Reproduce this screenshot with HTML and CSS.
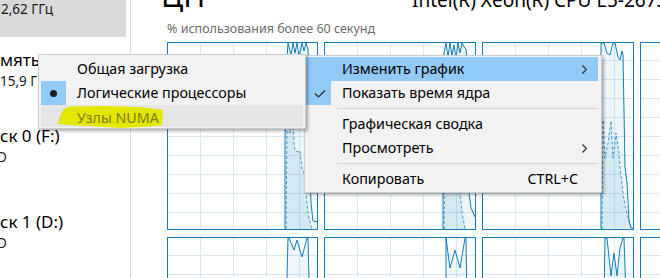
FILE: index.html
```html
<!DOCTYPE html>
<html lang="ru">
<head>
<meta charset="utf-8">
<title>Диспетчер задач — ЦП</title>
<link rel="stylesheet" href="styles.css">
</head>
<body>
<div class="app">
  <aside class="side">
    <div class="side-sel"><div class="side-sub">2,62 ГГц</div></div>
    <div class="side-item mem"><div class="side-title">мять</div><div class="side-sub">15,9 ГБ (16%)</div></div>
    <div class="side-item disk0"><div class="side-title">ск 0 (F:)</div><div class="side-sub cut">D</div></div>
    <div class="side-item disk1"><div class="side-title">ск 1 (D:)</div><div class="side-sub cut">D</div></div>
  </aside>

  <main class="main">
    <div class="header"><span class="title">ЦП</span><span class="cpu-name">Intel(R) Xeon(R) CPU E5-2673 v4 @ 2.30GHz</span></div>
    <div class="subtitle">% использования более 60 секунд</div>
    <div class="graphs">
      <div class="graph"><svg>
        <path class="grid" d="M32.5 0V186M65.5 0V186M98.5 0V186M131.5 0V186M0 17.5H152M0 36.5H152M0 55.5H152M0 74.5H152M0 93.5H152M0 112.5H152M0 131.5H152M0 150.5H152M0 169.5H152"/>
        <path class="area" d="M117,186 L117,100 L118,30 L120,0 L123,12 L125,0 L127,10 L129,0 L131,14 L134,0 L136,8 L138,0 L140,6 L141,40 L142,120 L143,160 L145,178 L150,179 L150,186 Z"/>
        <path class="karea" d="M118,186 L119,80 L120,40 L122,90 L124,50 L126,100 L127,108 L130,109 L132,108 L134,125 L136,130 L138,150 L140,170 L142,180 L144,186 Z"/>
        <path class="kline" d="M118,186 L119,80 L120,40 L122,90 L124,50 L126,100 L127,108 L130,109 L132,108 L134,125 L136,130 L138,150 L140,170 L142,180 L144,186"/>
        <path class="line" d="M117,186 L117,100 L118,30 L120,0 L123,12 L125,0 L127,10 L129,0 L131,14 L134,0 L136,8 L138,0 L140,6 L141,40 L142,120 L143,160 L145,178 L150,179"/>
      </svg></div>
      <div class="graph"><svg>
        <path class="grid" d="M32.5 0V186M65.5 0V186M98.5 0V186M131.5 0V186M0 17.5H152M0 36.5H152M0 55.5H152M0 74.5H152M0 93.5H152M0 112.5H152M0 131.5H152M0 150.5H152M0 169.5H152"/>
        <path class="area" d="M118,186 L118,80 L119,10 L121,0 L123,14 L125,0 L127,12 L129,2 L131,16 L133,0 L135,10 L137,0 L139,4 L141,6 L143,30 L144,150 L146,165 L152,178 L152,186 Z"/>
        <path class="karea" d="M119,186 L120,100 L122,60 L124,110 L126,80 L128,120 L132,130 L135,150 L137,170 L139,180 L140,186 Z"/>
        <path class="kline" d="M119,186 L120,100 L122,60 L124,110 L126,80 L128,120 L132,130 L135,150 L137,170 L139,180 L140,186"/>
        <path class="line" d="M118,186 L118,80 L119,10 L121,0 L123,14 L125,0 L127,12 L129,2 L131,16 L133,0 L135,10 L137,0 L139,4 L141,6 L143,30 L144,150 L146,165 L152,178"/>
      </svg></div>
      <div class="graph"><svg>
        <path class="grid" d="M32.5 0V186M65.5 0V186M98.5 0V186M131.5 0V186M0 17.5H152M0 36.5H152M0 55.5H152M0 74.5H152M0 93.5H152M0 112.5H152M0 131.5H152M0 150.5H152M0 169.5H152"/>
        <path class="area" d="M118,186 L118,0 L121,0 L124,10 L127,12 L130,0 L132,0 L135,14 L137,17 L139,8 L140,12 L142,124 L144,140 L146,177 L148,185 L148,186 Z"/>
        <path class="karea" d="M119,186 L120,77 L122,115 L125,100 L128,78 L130,115 L133,90 L136,110 L137,124 L140,150 L142,163 L148,185 Z"/>
        <path class="kline" d="M119,186 L120,77 L122,115 L125,100 L128,78 L130,115 L133,90 L136,110 L137,124 L140,150 L142,163 L148,185"/>
        <path class="line" d="M118,186 L118,0 L121,0 L124,10 L127,12 L130,0 L132,0 L135,14 L137,17 L139,8 L140,12 L142,124 L144,140 L146,177 L148,185 L150,185"/>
      </svg></div>
      <div class="graph"><svg>
        <path class="grid" d="M32.5 0V186M65.5 0V186M98.5 0V186M131.5 0V186M0 17.5H152M0 36.5H152M0 55.5H152M0 74.5H152M0 93.5H152M0 112.5H152M0 131.5H152M0 150.5H152M0 169.5H152"/>
      </svg></div>

      <div class="graph"><svg>
        <path class="grid" d="M32.5 0V186M65.5 0V186M98.5 0V186M131.5 0V186M0 17.5H152M0 36.5H152M0 55.5H152M0 74.5H152M0 93.5H152M0 112.5H152M0 131.5H152M0 150.5H152M0 169.5H152"/>
        <path class="area" d="M118.5,186 L118.5,60 L120,0 L121,0 L126,12 L129,2 L134,19 L139,0 L140,0 L141,40 L142,60 L142,186 Z"/>
        <path class="line" d="M118.5,60 L120,0 L121,0 L126,12 L129,2 L134,19 L139,0 L140,0 L141,40 L142,60"/>
      </svg></div>
      <div class="graph"><svg>
        <path class="grid" d="M32.5 0V186M65.5 0V186M98.5 0V186M131.5 0V186M0 17.5H152M0 36.5H152M0 55.5H152M0 74.5H152M0 93.5H152M0 112.5H152M0 131.5H152M0 150.5H152M0 169.5H152"/>
        <path class="area" d="M121,186 L121,0 L125,30 L130,12 L135,30 L140,0 L141,0 L142,60 L142,186 Z"/>
        <path class="line" d="M121,60 L121,0 L125,30 L130,12 L135,30 L140,0 L141,0 L142,60"/>
      </svg></div>
      <div class="graph"><svg>
        <path class="grid" d="M32.5 0V186M65.5 0V186M98.5 0V186M131.5 0V186M0 17.5H152M0 36.5H152M0 55.5H152M0 74.5H152M0 93.5H152M0 112.5H152M0 131.5H152M0 150.5H152M0 169.5H152"/>
        <path class="area" d="M121,186 L121,60 L122,0 L124,0 L128,38 L131,15 L134,38 L137,10 L140,0 L141,0 L143,60 L143,186 Z"/>
        <path class="line" d="M121,60 L122,0 L124,0 L128,38 L131,15 L134,38 L137,10 L140,0 L141,0 L143,60"/>
      </svg></div>
      <div class="graph"><svg>
        <path class="grid" d="M32.5 0V186M65.5 0V186M98.5 0V186M131.5 0V186M0 17.5H152M0 36.5H152M0 55.5H152M0 74.5H152M0 93.5H152M0 112.5H152M0 131.5H152M0 150.5H152M0 169.5H152"/>
      </svg></div>
    </div>
  </main>

  <div class="menu menu-main">
    <div class="menu-item hover">
      <span class="mi-check"></span>
      <span class="mi-label">Изменить график</span>
      <svg class="mi-arrow" width="5" height="9" viewBox="0 0 5 9"><path d="M0.5 0.5 L4.5 4.5 L0.5 8.5"/></svg>
    </div>
    <div class="menu-item">
      <span class="mi-check on"><svg class="tick" width="12" height="9" viewBox="0 0 12 9"><path d="M1 4.5 L4.5 8 L11 1.5"/></svg></span>
      <span class="mi-label">Показать время ядра</span>
    </div>
    <div class="menu-sep"><span></span></div>
    <div class="menu-item">
      <span class="mi-check"></span>
      <span class="mi-label">Графическая сводка</span>
    </div>
    <div class="menu-item">
      <span class="mi-check"></span>
      <span class="mi-label">Просмотреть</span>
      <svg class="mi-arrow" width="5" height="9" viewBox="0 0 5 9"><path d="M0.5 0.5 L4.5 4.5 L0.5 8.5"/></svg>
    </div>
    <div class="menu-sep"><span></span></div>
    <div class="menu-item">
      <span class="mi-check"></span>
      <span class="mi-label">Копировать</span>
      <span class="mi-key">CTRL+C</span>
    </div>
  </div>

  <div class="menu menu-sub">
    <svg class="marker" width="130" height="30" viewBox="0 0 130 30"><path d="M12 1.7 L44 1 L84 2 L107 5 L106 20 L94 21.5 L64 23 L34 21 L14 20 L2 19 L4 11 L8 4 Z"/></svg>
    <div class="menu-item">
      <span class="mi-check"></span>
      <span class="mi-label">Общая загрузка</span>
    </div>
    <div class="menu-item">
      <span class="mi-check on"><span class="dot"></span></span>
      <span class="mi-label">Логические процессоры</span>
    </div>
    <div class="menu-item numa">
      <span class="mi-check"></span>
      <span class="mi-label">Узлы NUMA</span>
    </div>
  </div>
</div>
</body>
</html>
```

FILE: styles.css
```css
html, body {
  margin: 0;
  padding: 0;
  background: #fff;
}

.app {
  position: relative;
  display: flex;
  width: 660px;
  height: 278px;
  overflow: hidden;
  background: #fff;
  font-family: "Noto Sans", "Open Sans", sans-serif;
  color: #000;
}

/* ---------- sidebar ---------- */
.side {
  flex: none;
  width: 126px;
  padding-right: 4px;
  border-right: 1px solid #d9d9d9;
  overflow: hidden;
  white-space: nowrap;
}

.side-sel {
  height: 37px;
  background: #d9d9d9;
}

.side-sel .side-sub {
  line-height: 18px;
  padding-left: 1px;
}

.side-title {
  font-size: 17px;
  line-height: 20px;
}

.side-sub {
  font-size: 13.5px;
  line-height: 22px;
  color: #1a1a1a;
}

.side-sub.cut {
  margin-left: -3px;
}

.mem { margin-top: 13px; }
.disk0 { margin-top: 34px; }
.disk1 { margin-top: 44px; }

/* ---------- main ---------- */
.main {
  flex: 1;
  min-width: 0;
  padding-left: 36px;
  white-space: nowrap;
}

.header {
  display: flex;
  align-items: baseline;
  height: 30px;
  line-height: 30px;
  margin-top: -19px;
}

.title {
  flex: none;
  width: 251px;
  margin-left: -6px;
  font-size: 30px;
}

.cpu-name {
  font-size: 19px;
}

.subtitle {
  margin-top: 10px;
  font-size: 12.5px;
  line-height: 16px;
  color: #6b6b6b;
}

.graphs {
  margin-top: 5px;
  display: grid;
  grid-template-columns: 151px 152px 152px 151px;
  grid-auto-rows: 188px;
  column-gap: 6px;
  row-gap: 7px;
}

.graph {
  box-sizing: border-box;
  border: 1px solid #117dbb;
  overflow: hidden;
}

.graph svg {
  display: block;
  width: 100%;
  height: 100%;
}

.grid {
  fill: none;
  stroke: #d9eaf4;
  stroke-width: 1;
}

.area {
  fill: rgba(17, 125, 187, 0.07);
  stroke: none;
}

.karea {
  fill: rgba(17, 125, 187, 0.11);
  stroke: none;
}

.line {
  fill: none;
  stroke: #117dbb;
  stroke-width: 1;
}

.kline {
  fill: none;
  stroke: #117dbb;
  stroke-width: 1;
  stroke-dasharray: 3 2;
  opacity: 0.75;
}

/* ---------- context menus ---------- */
.menu {
  position: absolute;
  box-sizing: border-box;
  background: #f2f2f2;
  border: 1px solid #cccccc;
  box-shadow: 2px 2px 3px rgba(0, 0, 0, 0.32);
  font-size: 14.3px;
  white-space: nowrap;
}

.menu-main {
  left: 304px;
  top: 55px;
  width: 298px;
  padding: 1px 3px 1px 1px;
  z-index: 1;
}

.menu-sub {
  left: 38px;
  top: 54px;
  width: 268px;
  padding: 2px 2px 1px 2px;
  z-index: 2;
}

.menu-item {
  display: flex;
  align-items: center;
  height: 24px;
  line-height: 24px;
}

.menu-item.hover {
  background: #91c9f7;
}

.mi-check {
  flex: none;
  width: 25px;
  height: 24px;
  display: flex;
  align-items: center;
  justify-content: center;
}

.mi-check.on {
  background: #91c9f7;
}

.menu-main .mi-check {
  padding-left: 3px;
  box-sizing: border-box;
}

.mi-label {
  flex: 1;
  margin-left: 11px;
  position: relative;
}

.mi-arrow {
  flex: none;
  margin-right: 11px;
}

.mi-arrow path,
.tick path {
  fill: none;
  stroke: #2b2b2b;
  stroke-width: 1.2;
}

.mi-key {
  flex: none;
  margin-right: 20px;
}

.dot {
  width: 7px;
  height: 7px;
  border-radius: 50%;
  background: #1e1e1e;
}

.menu-sep {
  height: 7px;
  display: flex;
  align-items: center;
  padding-left: 31px;
}

.menu-sep span {
  flex: 1;
  height: 1px;
  background: #d4d4d4;
}

.menu-item.numa {
  height: 22px;
  background: #e5e5e5;
}

.menu-item.numa .mi-label {
  padding-top: 3px;
  color: #7d7d12;
}

.marker {
  position: absolute;
  left: 17px;
  top: 50px;
}

.marker path {
  fill: #e4e800;
}
```
